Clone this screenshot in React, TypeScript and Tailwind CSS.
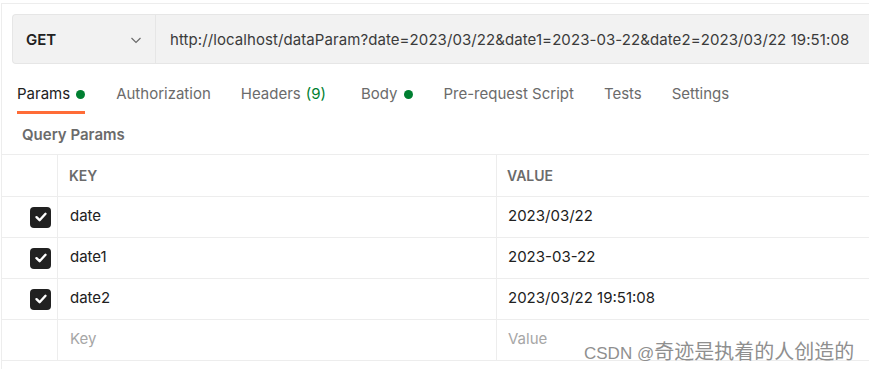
import React from "react";

const Check = () => (
  <div className="w-[21px] h-[21px] rounded-[4px] bg-[#212121] flex items-center justify-center">
    <svg width="14" height="14" viewBox="0 0 14 14" fill="none">
      <path d="M2.5 7.2 L5.6 10.2 L11.5 3.8" stroke="white" strokeWidth="2.4" strokeLinecap="round" strokeLinejoin="round" />
    </svg>
  </div>
);

const rows = [
  { k: "date", v: "2023/03/22" },
  { k: "date1", v: "2023-03-22" },
  { k: "date2", v: "2023/03/22 19:51:08" },
];

export default function App() {
  return (
    <div
      className="w-[869px] h-[369px] bg-white relative overflow-hidden"
      style={{ fontFamily: "Inter, 'Noto Sans', sans-serif" }}
    >
      <div className="mt-[3px] ml-[1px] border-t border-l border-[#ededed] h-[366px]">
        <div className="pt-[10px] pl-[10px]">
          <div className="h-[50px] flex bg-[#f2f2f2] border border-r-0 border-[#e6e6e6] rounded-l-[4px]">
            <div className="w-[143px] border-r border-[#e6e6e6] flex items-center pt-[2px] pl-[13px] pr-[12px] justify-between">
              <span className="text-[15px] font-semibold text-[#212121]">GET</span>
              <svg width="14" height="14" viewBox="0 0 14 14" fill="none">
                <path d="M2.5 5 L7 9.5 L11.5 5" stroke="#6b6b6b" strokeWidth="1.2" />
              </svg>
            </div>
            <div className="flex items-center pt-[2px] pl-[14px] text-[15px] tracking-[0.08px] text-[#3b3b3b] whitespace-nowrap">
              http://localhost/dataParam?date=2023/03/22&amp;date1=2023-03-22&amp;date2=2023/03/22 19:51:08
            </div>
          </div>
        </div>
        <div className="flex pl-[15px] h-[50px] text-[15px] text-[#6b6b6b] whitespace-nowrap">
          <div className="relative flex items-center h-full pt-[10px] text-[#212121]">
            Params
            <span className="ml-[6px] w-[9px] h-[9px] rounded-full bg-[#007f31]" />
            <div className="absolute left-0 right-0 bottom-0 h-[3px] bg-[#ff6c37]" />
          </div>
          <div className="flex items-center h-full pt-[10px] ml-[31px]">Authorization</div>
          <div className="flex items-center h-full pt-[10px] ml-[30px]">
            Headers<span className="ml-[5px] text-[#007f31]">(9)</span>
          </div>
          <div className="flex items-center h-full pt-[10px] ml-[35px]">
            Body
            <span className="ml-[7px] w-[9px] h-[9px] rounded-full bg-[#007f31]" />
          </div>
          <div className="flex items-center h-full pt-[10px] ml-[30px]">Pre-request Script</div>
          <div className="flex items-center h-full pt-[10px] ml-[30px]">Tests</div>
          <div className="flex items-center h-full pt-[10px] ml-[30px]">Settings</div>
        </div>
        <div className="h-[40px] flex items-center pt-[2px] pl-[20px] text-[15px] font-semibold text-[#6b6b6b]">
          Query Params
        </div>
        <div className="border-t border-[#ededed] text-[15px]">
          <div className="flex h-[42px] border-b border-[#ededed]">
            <div className="w-[56px] border-r border-[#ededed]" />
            <div className="w-[439px] border-r border-[#ededed] flex items-center pl-[11px] text-[14px] font-semibold text-[#6b6b6b]">
              KEY
            </div>
            <div className="flex-1 flex items-center pl-[10px] text-[14px] font-semibold text-[#6b6b6b]">
              VALUE
            </div>
          </div>
          {rows.map((r) => (
            <div key={r.k} className="flex h-[41px] border-b border-[#ededed]">
              <div className="w-[56px] border-r border-[#ededed] flex items-center pl-[28px]">
                <Check />
              </div>
              <div className="w-[439px] border-r border-[#ededed] flex items-center pl-[12px] pb-[2px] text-[#212121]">
                {r.k}
              </div>
              <div className="flex-1 flex items-center pl-[11px] pb-[2px] text-[#212121]">{r.v}</div>
            </div>
          ))}
          <div className="flex h-[41px] border-b border-[#ededed]">
            <div className="w-[56px] border-r border-[#ededed]" />
            <div className="w-[439px] border-r border-[#ededed] flex items-center pl-[12px] pb-[2px] text-[#a6a6a6]">
              Key
            </div>
            <div className="flex-1 flex items-center pl-[11px] pb-[2px] text-[#a6a6a6]">Value</div>
          </div>
        </div>
      </div>
      <div
        className="absolute left-[584px] top-[336px] text-[#8f8f8f] whitespace-nowrap flex items-baseline"
        style={{ fontFamily: "'Liberation Sans', 'Noto Sans CJK SC', sans-serif" }}
      >
        <span className="text-[17px]">CSDN @</span>
        <span className="text-[20px]" style={{ fontFamily: "'Noto Sans CJK SC', sans-serif" }}>
          奇迹是执着的人创造的
        </span>
      </div>
    </div>
  );
}
